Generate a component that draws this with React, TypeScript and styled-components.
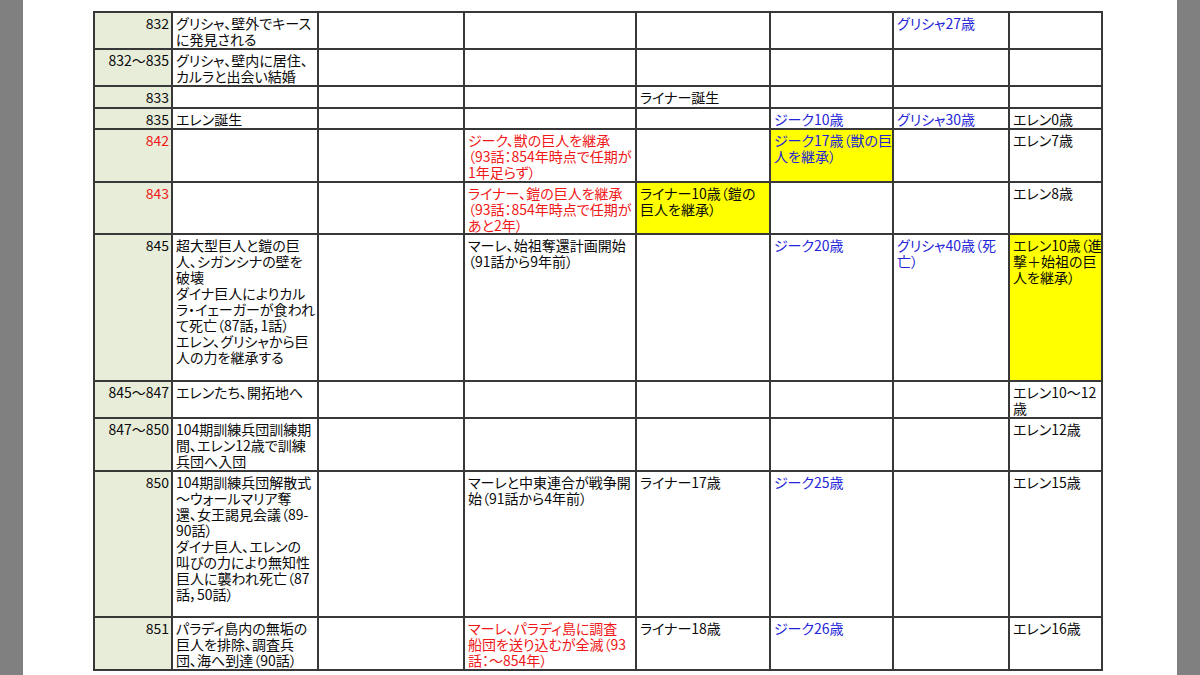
import { Fragment } from "react";
import styled, { createGlobalStyle } from "styled-components";

type Tone = "black" | "red" | "blue";
type CellData = { lines: string[]; tone?: Tone; fill?: boolean } | null;
type RowData = { year: string; red?: boolean; h: number; cells: CellData[] };

const colWidths = [78, 146, 146, 172, 134, 123, 116, 93];

const t = (tone: Tone, ...lines: string[]): CellData => ({ lines, tone });
const y = (tone: Tone, ...lines: string[]): CellData => ({ lines, tone, fill: true });

const rows: RowData[] = [
  {
    year: "832",
    h: 37,
    cells: [t("black", "グリシャ、壁外でキース", "に発見される"), null, null, null, null, t("blue", "グリシャ27歳"), null],
  },
  {
    year: "832～835",
    h: 37,
    cells: [t("black", "グリシャ、壁内に居住、", "カルラと出会い結婚"), null, null, null, null, null, null],
  },
  {
    year: "833",
    h: 22,
    cells: [null, null, null, t("black", "ライナー誕生"), null, null, null],
  },
  {
    year: "835",
    h: 21,
    cells: [t("black", "エレン誕生"), null, null, null, t("blue", "ジーク10歳"), t("blue", "グリシャ30歳"), t("black", "エレン0歳")],
  },
  {
    year: "842",
    red: true,
    h: 53,
    cells: [
      null,
      null,
      t("red", "ジーク、獣の巨人を継承", "（93話：854年時点で任期が", "1年足らず）"),
      null,
      y("blue", "ジーク17歳（獣の巨", "人を継承）"),
      null,
      t("black", "エレン7歳"),
    ],
  },
  {
    year: "843",
    red: true,
    h: 52,
    cells: [
      null,
      null,
      t("red", "ライナー、鎧の巨人を継承", "（93話：854年時点で任期が", "あと2年）"),
      y("black", "ライナー10歳（鎧の", "巨人を継承）"),
      null,
      null,
      t("black", "エレン8歳"),
    ],
  },
  {
    year: "845",
    h: 147,
    cells: [
      t(
        "black",
        "超大型巨人と鎧の巨",
        "人、シガンシナの壁を",
        "破壊",
        "ダイナ巨人によりカル",
        "ラ・イェーガーが食われ",
        "て死亡（87話，1話）",
        "エレン、グリシャから巨",
        "人の力を継承する"
      ),
      null,
      t("black", "マーレ、始祖奪還計画開始", "（91話から9年前）"),
      null,
      t("blue", "ジーク20歳"),
      t("blue", "グリシャ40歳（死", "亡）"),
      y("black", "エレン10歳（進", "撃＋始祖の巨", "人を継承）"),
    ],
  },
  {
    year: "845～847",
    h: 37,
    cells: [t("black", "エレンたち、開拓地へ"), null, null, null, null, null, t("black", "エレン10～12", "歳")],
  },
  {
    year: "847～850",
    h: 53,
    cells: [
      t("black", "104期訓練兵団訓練期", "間、エレン12歳で訓練", "兵団へ入団"),
      null,
      null,
      null,
      null,
      null,
      t("black", "エレン12歳"),
    ],
  },
  {
    year: "850",
    h: 146,
    cells: [
      t(
        "black",
        "104期訓練兵団解散式",
        "～ウォールマリア奪",
        "還、女王謁見会議（89-",
        "90話）",
        "ダイナ巨人、エレンの",
        "叫びの力により無知性",
        "巨人に襲われ死亡（87",
        "話，50話）"
      ),
      null,
      t("black", "マーレと中東連合が戦争開", "始（91話から4年前）"),
      t("black", "ライナー17歳"),
      t("blue", "ジーク25歳"),
      null,
      t("black", "エレン15歳"),
    ],
  },
  {
    year: "851",
    h: 53,
    cells: [
      t("black", "パラディ島内の無垢の", "巨人を排除、調査兵", "団、海へ到達（90話）"),
      null,
      t("red", "マーレ、パラディ島に調査", "船団を送り込むが全滅（93", "話：～854年）"),
      t("black", "ライナー18歳"),
      t("blue", "ジーク26歳"),
      null,
      t("black", "エレン16歳"),
    ],
  },
];

const toneColor: Record<Tone, string> = {
  black: "#0a0a0a",
  red: "#f01818",
  blue: "#2424d8",
};

export default function App() {
  return (
    <Screen>
      <GlobalStyle />
      <SideBar />
      <Sheet>
        <Table>
          <colgroup>
            {colWidths.map((w, i) => (
              <col key={i} style={{ width: w }} />
            ))}
          </colgroup>
          <tbody>
            {rows.map((row) => (
              <Row key={row.year + row.h} $h={row.h}>
                <YearCell $red={row.red}>{row.year}</YearCell>
                {row.cells.map((cell, i) => (
                  <Cell key={i} $tone={cell?.tone ?? "black"} $fill={cell?.fill}>
                    {cell?.lines.map((line, j) => (
                      <Fragment key={j}>
                        {j > 0 && <br />}
                        {line}
                      </Fragment>
                    ))}
                  </Cell>
                ))}
              </Row>
            ))}
          </tbody>
        </Table>
      </Sheet>
      <SideBar />
    </Screen>
  );
}

const GlobalStyle = createGlobalStyle`
  html, body {
    margin: 0;
    padding: 0;
    background: #ffffff;
  }
`;

const Screen = styled.div`
  display: flex;
  width: 1200px;
  height: 675px;
  overflow: hidden;
  font-family: "Noto Sans CJK JP", "Noto Sans", sans-serif;
  font-size: 14px;
  font-feature-settings: "palt";
`;

const SideBar = styled.div`
  width: 23px;
  flex-shrink: 0;
  background: #808080;
`;

const Sheet = styled.div`
  flex: 1;
  background: #ffffff;
  padding: 11px 0 0 70px;
`;

const Table = styled.table`
  border-collapse: collapse;
  table-layout: fixed;
  width: 1008px;
`;

const Row = styled.tr<{ $h: number }>`
  height: ${({ $h }) => $h}px;
`;

const BaseCell = styled.td`
  border: 2px solid #383838;
  vertical-align: top;
  line-height: 16px;
  padding: 2px 2px 0 3px;
  white-space: nowrap;
  overflow: visible;
`;

const YearCell = styled(BaseCell)<{ $red?: boolean }>`
  background: #e8edda;
  text-align: right;
  padding-right: 2px;
  color: ${({ $red }) => ($red ? "#f01818" : "#0a0a0a")};
`;

const Cell = styled(BaseCell)<{ $tone: Tone; $fill?: boolean }>`
  background: ${({ $fill }) => ($fill ? "#ffff00" : "#ffffff")};
  color: ${({ $tone }) => toneColor[$tone]};
`;
